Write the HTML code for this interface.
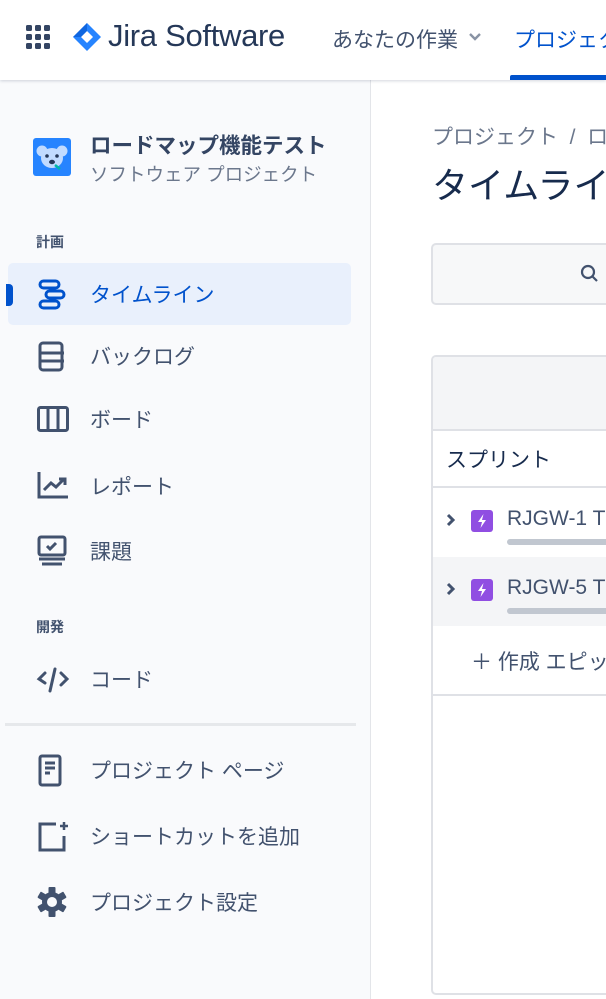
<!DOCTYPE html>
<html><head><meta charset="utf-8"><style>
*{margin:0;padding:0;box-sizing:border-box}
html{width:606px;height:999px;overflow:hidden}
body{width:606px;height:999px;overflow:hidden;background:#fff;font-family:"Liberation Sans","Noto Sans CJK JP",sans-serif;color:#42526e;position:relative}
.abs{position:absolute}
.hdr{left:0;top:0;width:606px;height:80px;background:#fff;box-shadow:0 1px 3px rgba(9,30,66,.18);z-index:3}
.side{left:0;top:80px;width:371px;height:919px;background:#f9fafc;border-right:1px solid #e3e5e9}
.item{position:absolute;left:90px;font-size:21px;color:#42526e;line-height:30px;white-space:nowrap}
.ico{position:absolute;left:36px}
.sec{position:absolute;left:36px;font-size:14px;font-weight:bold;color:#42526e}
</style></head><body>
<div class="abs hdr">
  <svg class="abs" style="left:25px;top:24px" width="28" height="28" viewBox="0 0 28 28" fill="#344563">
    <rect x="1" y="1" width="6" height="6" rx="1.5"/><rect x="10" y="1" width="6" height="6" rx="1.5"/><rect x="19" y="1" width="6" height="6" rx="1.5"/>
    <rect x="1" y="10" width="6" height="6" rx="1.5"/><rect x="10" y="10" width="6" height="6" rx="1.5"/><rect x="19" y="10" width="6" height="6" rx="1.5"/>
    <rect x="1" y="19" width="6" height="6" rx="1.5"/><rect x="10" y="19" width="6" height="6" rx="1.5"/><rect x="19" y="19" width="6" height="6" rx="1.5"/>
  </svg>
  <svg class="abs" style="left:72px;top:22px" width="30" height="30" viewBox="0 0 30 30">
    <path d="M15 1 L29 15 L15 29 L1 15 Z" fill="#2684ff"/>
    <path d="M15 9 L21 15 L15 21 L9 15 Z" fill="#fff"/>
    <path d="M15 1 L15 9 L9 15 L1 15 Z" fill="#0052cc" opacity=".6"/>
  </svg>
  <div class="abs" style="left:108px;top:18px;font-size:31px;color:#253858;letter-spacing:-0.3px;font-weight:300">Jira Software</div>
  <div class="abs" style="left:332px;top:24px;font-size:21px;color:#42526e">あなたの作業</div>
  <svg class="abs" style="left:467px;top:31px" width="16" height="12" viewBox="0 0 16 12"><path d="M3 3 L8 8 L13 3" stroke="#8993a4" stroke-width="2.4" fill="none"/></svg>
  <div class="abs" style="left:514px;top:24px;font-size:21px;color:#0052cc;white-space:nowrap">プロジェクト</div>
  <div class="abs" style="left:510px;top:75px;width:96px;height:5px;background:#0052cc;border-radius:2px 0 0 0"></div>
</div>

<div class="abs side">
  <svg class="abs" style="left:33px;top:58px" width="38" height="38" viewBox="0 0 38 38">
    <rect width="38" height="38" rx="3" fill="#2684ff"/>
    <circle cx="9" cy="13" r="5.5" fill="#c1dbff"/><circle cx="29" cy="13" r="5.5" fill="#c1dbff"/>
    <ellipse cx="19" cy="20" rx="11" ry="10" fill="#c1dbff"/>
    <circle cx="14" cy="18" r="1.8" fill="#253858"/><circle cx="24" cy="18" r="1.8" fill="#253858"/>
    <ellipse cx="19" cy="24" rx="3" ry="2.2" fill="#253858"/>
    <path d="M22 27 L27 31" stroke="#00b8a9" stroke-width="2.5"/>
  </svg>
  <div class="abs" style="left:90px;top:49px;font-size:21.5px;font-weight:bold;color:#344563;white-space:nowrap">ロードマップ機能テスト</div>
  <div class="abs" style="left:90px;top:81px;font-size:18.5px;color:#6b778c;white-space:nowrap">ソフトウェア プロジェクト</div>
</div>

<div class="sec" style="top:232px">計画</div>
<div class="abs" style="left:8px;top:263px;width:343px;height:62px;background:#e9f0fc;border-radius:5px"></div>
<div class="abs" style="left:6px;top:284px;width:7px;height:22px;background:#0052cc;border-radius:0 4px 4px 0"></div>
<svg class="ico" style="top:278px" width="32" height="32" viewBox="0 0 32 32" fill="none" stroke="#0052cc" stroke-width="3">
  <rect x="4" y="3" width="19" height="7" rx="3.5"/><rect x="10" y="13" width="18" height="7" rx="3.5"/><rect x="4" y="23" width="19" height="7" rx="3.5"/>
</svg>
<div class="item" style="top:281px;color:#0052cc">タイムライン</div>

<svg class="ico" style="top:340px" width="32" height="32" viewBox="0 0 32 32" fill="none" stroke="#42526e" stroke-width="3">
  <rect x="4" y="3" width="22" height="27" rx="3"/><path d="M4 13 H28 M4 21 H28"/>
</svg>
<div class="item" style="top:343px">バックログ</div>

<svg class="ico" style="top:405px" width="34" height="28" viewBox="0 0 34 28" fill="none" stroke="#42526e" stroke-width="3">
  <rect x="2.5" y="2.5" width="29" height="23" rx="2"/><path d="M12 2.5 V25.5 M22 2.5 V25.5"/>
</svg>
<div class="item" style="top:406px">ボード</div>

<svg class="ico" style="top:470px" width="34" height="30" viewBox="0 0 34 30" fill="none" stroke="#42526e" stroke-width="3">
  <path d="M3 2 V27 H32"/><path d="M8 20 L15 13 L20 17 L28 9" /><path d="M23 9 H29 V15"/>
</svg>
<div class="item" style="top:473px">レポート</div>

<svg class="ico" style="top:535px" width="32" height="32" viewBox="0 0 32 32" fill="none" stroke="#42526e" stroke-width="3">
  <rect x="3" y="2" width="26" height="18" rx="2"/><path d="M11 11 L14 14 L20 8"/><path d="M3 24 H29 M6 29 H26"/>
</svg>
<div class="item" style="top:538px">課題</div>

<div class="sec" style="top:617px">開発</div>
<svg class="ico" style="top:665px" width="34" height="30" viewBox="0 0 34 30" fill="none" stroke="#42526e" stroke-width="3" stroke-linecap="round">
  <path d="M9 8 L3 14 L9 18"/><path d="M25 8 L31 14 L25 20"/><path d="M19 4 L14 26"/>
</svg>
<div class="item" style="top:666px">コード</div>

<div class="abs" style="left:5px;top:723px;width:351px;height:3px;background:#e6e8eb"></div>

<svg class="ico" style="top:754px" width="32" height="34" viewBox="0 0 32 34" fill="none" stroke="#42526e" stroke-width="3">
  <rect x="4" y="2" width="20" height="29" rx="2"/><path d="M9 9 H19 M9 14 H19 M9 19 H14"/>
</svg>
<div class="item" style="top:757px">プロジェクト ページ</div>

<svg class="ico" style="top:820px" width="34" height="34" viewBox="0 0 34 34" fill="none" stroke="#42526e" stroke-width="3">
  <path d="M20 4 H4 V30 H28 V16"/><path d="M28 2 V10 M24 6 H32" stroke-width="2.5"/>
</svg>
<div class="item" style="top:823px">ショートカットを追加</div>

<svg class="ico" style="top:886px" width="32" height="32" viewBox="0 0 32 32">
  <g fill="#42526e" transform="translate(16 16)">
    <circle r="10"/>
    <rect x="-3.5" y="-15" width="7" height="8" rx="1"/>
    <rect x="-3.5" y="-15" width="7" height="8" rx="1" transform="rotate(60)"/>
    <rect x="-3.5" y="-15" width="7" height="8" rx="1" transform="rotate(120)"/>
    <rect x="-3.5" y="-15" width="7" height="8" rx="1" transform="rotate(180)"/>
    <rect x="-3.5" y="-15" width="7" height="8" rx="1" transform="rotate(240)"/>
    <rect x="-3.5" y="-15" width="7" height="8" rx="1" transform="rotate(300)"/>
  </g>
  <circle cx="16" cy="16" r="5" fill="#f9fafc"/>
</svg>
<div class="item" style="top:889px">プロジェクト設定</div>

<!-- main -->
<div class="abs" style="left:432px;top:121px;font-size:21px;color:#6b778c;white-space:nowrap">プロジェクト &nbsp;/&nbsp; ロ</div>
<div class="abs" style="left:432px;top:157px;font-size:36px;color:#172b4d;white-space:nowrap">タイムライン</div>

<div class="abs" style="left:431px;top:243px;width:190px;height:62px;background:#f7f8f9;border:2px solid #dfe1e6;border-radius:5px"></div>
<svg class="abs" style="left:579px;top:263px" width="22" height="22" viewBox="0 0 22 22" fill="none" stroke="#42526e" stroke-width="2.2"><circle cx="9" cy="9" r="6"/><path d="M13.5 13.5 L18 18"/></svg>

<div class="abs" style="left:431px;top:355px;width:190px;height:640px;border:2px solid #dfe1e6;border-radius:5px;background:#fff;overflow:hidden">
  <div style="height:74px;background:#f4f5f7;border-bottom:2px solid #dfe1e6"></div>
  <div style="height:57px;border-bottom:2px solid #dfe1e6;font-size:21px;color:#172b4d;padding:13px 0 0 13px">スプリント</div>
  <div style="height:69px;position:relative">
    <svg style="position:absolute;left:12px;top:25px" width="12" height="14" viewBox="0 0 12 14"><path d="M3 2 L8 7 L3 12" stroke="#42526e" stroke-width="3" fill="none"/></svg>
    <svg style="position:absolute;left:38px;top:22px" width="22" height="22" viewBox="0 0 22 22"><rect width="22" height="22" rx="3" fill="#904ee2"/><path d="M12.5 4 L7 12 H11 L9.5 18 L15 10 H11 Z" fill="#fff"/></svg>
    <div style="position:absolute;left:74px;top:19px;font-size:21px;color:#42526e;white-space:nowrap">RJGW-1 T</div>
    <div style="position:absolute;left:74px;top:51px;width:120px;height:6px;border-radius:3px;background:#c1c7d0"></div>
  </div>
  <div style="height:69px;position:relative;background:#f4f5f7">
    <svg style="position:absolute;left:12px;top:25px" width="12" height="14" viewBox="0 0 12 14"><path d="M3 2 L8 7 L3 12" stroke="#42526e" stroke-width="3" fill="none"/></svg>
    <svg style="position:absolute;left:38px;top:22px" width="22" height="22" viewBox="0 0 22 22"><rect width="22" height="22" rx="3" fill="#904ee2"/><path d="M12.5 4 L7 12 H11 L9.5 18 L15 10 H11 Z" fill="#fff"/></svg>
    <div style="position:absolute;left:74px;top:19px;font-size:21px;color:#42526e;white-space:nowrap">RJGW-5 T</div>
    <div style="position:absolute;left:74px;top:51px;width:120px;height:6px;border-radius:3px;background:#c1c7d0"></div>
  </div>
  <div style="height:70px;border-bottom:2px solid #dfe1e6;font-size:21px;color:#42526e;padding:20px 0 0 38px;white-space:nowrap">＋ 作成 エピック</div>
</div>
</body></html>
